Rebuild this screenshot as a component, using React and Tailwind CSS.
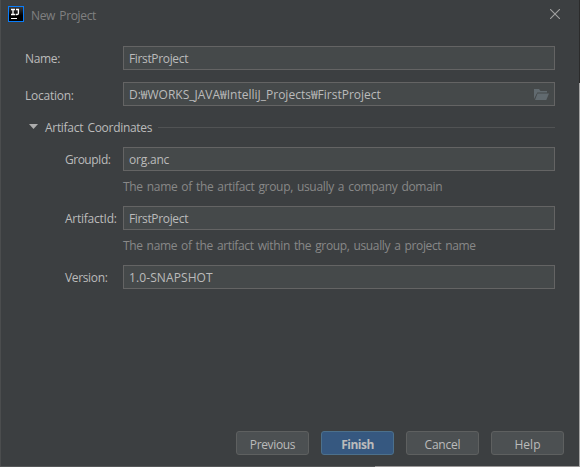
import React from "react";

function Field({ label, labelClass, value, valueClass, children }) {
  return (
    <div className="flex h-6 items-center">
      <label className={`shrink-0 text-[#bbbbbb] ${labelClass}`}>{label}</label>
      <div className="flex h-6 w-[432px] items-center justify-between border border-[#646464] bg-[#45494a] pl-[5px] pr-[5px] text-[#bbbbbb]">
        <span className={`pt-0.5 ${valueClass}`}>{value}</span>
        {children}
      </div>
    </div>
  );
}

function Button({ children, primary = false, textClass }) {
  return (
    <button
      className={`flex h-6 w-[73px] items-center justify-center rounded-[3px] border pt-[3px] ${textClass} ${
        primary
          ? "border-[#4c708c] bg-[#365880] font-bold text-[#bbbbbb]"
          : "border-[#5e6060] bg-[#4c5052] text-[#bbbbbb]"
      }`}
    >
      {children}
    </button>
  );
}

function AppIcon() {
  return (
    <svg width="16" height="16" viewBox="0 0 16 16" className="shrink-0">
      <defs>
        <linearGradient id="tile" x1="0" y1="0" x2="0" y2="1">
          <stop offset="0" stopColor="#3a3a3c" />
          <stop offset="0.6" stopColor="#000" />
        </linearGradient>
      </defs>
      <rect width="16" height="16" fill="#087cfa" />
      <rect x="1" y="1" width="14" height="14" fill="url(#tile)" />
      <path d="M3 3.5h4M5 3v6M3 8.5h4M8 3.5h3M10.4 3v4.2q0 1.3-1.3 1.3H7.6" fill="none" stroke="#fff" strokeWidth="1.3" />
      <rect x="3" y="12" width="6" height="1" fill="#fff" />
    </svg>
  );
}

export default function App() {
  return (
    <div className="flex h-[467px] w-[580px] overflow-hidden whitespace-nowrap bg-[#555758] font-['Open_Sans','Noto_Sans_CJK_KR',sans-serif] text-[12px] leading-4">
      <div className="flex w-[579px] flex-col">
        <div className="flex h-[466px] flex-col border-l border-[#4b4d4e] bg-[#3c3f41]">
          <header className="flex h-[46px] items-start pl-[7px] pr-[19px] pt-[6px]">
            <AppIcon />
            <h1 className="ml-[7px] mt-0.5 grow tracking-[-0.35px] text-[#808080] [word-spacing:1.5px]">New Project</h1>
            <svg width="10" height="10" viewBox="0 0 10 10" className="mt-[3px]">
              <path d="M0 0l10 10M10 0L0 10" stroke="#a0a0a0" strokeWidth="1.1" />
            </svg>
          </header>
          <main className="flex grow flex-col pl-[24px]">
            <Field label="Name:" labelClass="w-[98px] pt-0.5 tracking-[-0.35px]" value="FirstProject" valueClass="tracking-[-0.35px]" />
            <div className="h-3" />
            <Field
              label="Location:"
              labelClass="w-[98px] pt-1 tracking-[-0.25px]"
              value="D:₩WORKS_JAVA₩IntelliJ_Projects₩FirstProject"
              valueClass="tracking-[0px]"
            >
              <svg width="15" height="11" viewBox="0 0 15 11">
                <path d="M0 10V0h5l1.5 2H13v1.5H3.3z" fill="#616a6f" />
                <path d="M3.5 4.5H15L12.3 11H1z" fill="#616a6f" />
              </svg>
            </Field>
            <div className="mt-[13px] flex h-4 items-center">
              <svg width="9" height="5" viewBox="0 0 9 5" className="mb-px ml-1">
                <path d="M0 0h9L4.5 5z" fill="#adadad" />
              </svg>
              <span className="ml-[7px] w-[113px] pt-0.5 tracking-[-0.3px] text-[#bbbbbb] [word-spacing:1.5px]">
                Artifact Coordinates
              </span>
              <div className="h-px w-[397px] bg-[#515354]" />
            </div>
            <div className="mt-3 flex flex-col pl-10">
              <Field label="GroupId:" labelClass="w-[58px] pt-0.5 tracking-[-0.5px]" value="org.anc" valueClass="tracking-[-0.2px]" />
              <p className="ml-[58px] mt-2 h-[27px] tracking-[-0.32px] text-[#888888] [word-spacing:1.2px]">
                The name of the artifact group, usually a company domain
              </p>
              <Field label="ArtifactId:" labelClass="w-[58px] pt-0.5 tracking-[-0.25px]" value="FirstProject" valueClass="tracking-[-0.35px]" />
              <p className="ml-[58px] mt-2 h-[27px] tracking-[-0.35px] text-[#888888] [word-spacing:1.2px]">
                The name of the artifact within the group, usually a project name
              </p>
              <Field label="Version:" labelClass="w-[58px] pt-0.5 tracking-[-0.35px]" value="1.0-SNAPSHOT" valueClass="tracking-[0.1px]" />
            </div>
          </main>
          <footer className="flex gap-3 pb-[11px] pl-[235px]">
            <Button textClass="tracking-[-0.35px]">Previous</Button>
            <Button primary textClass="tracking-[-0.5px]">Finish</Button>
            <Button textClass="tracking-[-0.2px]">Cancel</Button>
            <Button textClass="tracking-[0px]">Help</Button>
          </footer>
        </div>
        <div className="ml-[375px] h-px bg-[#999797]" />
      </div>
      <div className="flex w-px flex-col">
        <div className="h-[83px] bg-[#2b2b2b]" />
        <div className="grow bg-[#a5a5a5]" />
      </div>
    </div>
  );
}
